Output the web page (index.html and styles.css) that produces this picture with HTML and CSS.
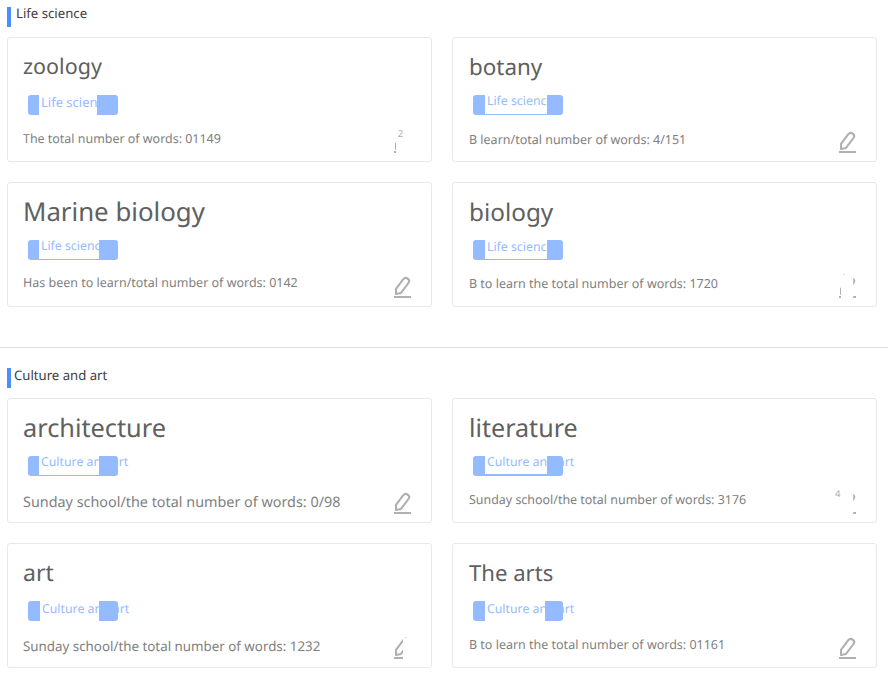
FILE: index.html
```html
<!DOCTYPE html>
<html lang="en">
<head>
<meta charset="utf-8">
<title>Word categories</title>
<link rel="stylesheet" href="styles.css">
</head>
<body>
<svg class="defs" width="0" height="0" aria-hidden="true">
  <defs>
    <g id="pencil">
      <path d="M9 16.8L16.3 7.2Q18.4 4.9 21 6.9Q23.2 8.7 21.5 11L14 20.9L9.1 22Z" fill="none" stroke="#b0b0b0" stroke-width="2.1" stroke-linejoin="round"/>
      <path d="M7 24h17v2H7z" fill="#b0b0b0"/>
    </g>
    <clipPath id="edge-left"><path d="M7 0h2v30H7z"/></clipPath>
    <clipPath id="edge-right"><path d="M21.2 0h3v30h-3z"/></clipPath>
    <clipPath id="half"><path d="M0 0h16v30H0z"/></clipPath>
  </defs>
</svg>
<section class="section">
  <h2 class="heading heading-life">Life science</h2>
  <div class="grid">
    <article class="card zoology">
      <h3 class="title">zoology</h3>
      <div class="tag"><span class="tag-text">Life scien</span></div>
      <div class="foot"><p class="count">The total number of words: 01149</p>
        <svg class="edit" viewBox="0 0 30 30"><use href="#pencil" clip-path="url(#edge-left)"/><text class="mark" x="10.8" y="10">2</text></svg></div>
    </article>
    <article class="card botany">
      <h3 class="title">botany</h3>
      <div class="tag"><span class="tag-text">Life scienc</span></div>
      <div class="foot"><p class="count">B learn/total number of words: 4/151</p>
        <svg class="edit" viewBox="0 0 30 30"><use href="#pencil"/></svg></div>
    </article>
    <article class="card marine">
      <h3 class="title">Marine biology</h3>
      <div class="tag"><span class="tag-text">Life scienc</span></div>
      <div class="foot"><p class="count">Has been to learn/total number of words: 0142</p>
        <svg class="edit" viewBox="0 0 30 30"><use href="#pencil"/></svg></div>
    </article>
    <article class="card biology">
      <h3 class="title">biology</h3>
      <div class="tag"><span class="tag-text">Life scienc</span></div>
      <div class="foot"><p class="count">B to learn the total number of words: 1720</p>
        <svg class="edit" viewBox="0 0 30 30"><use href="#pencil" clip-path="url(#edge-left)"/><use href="#pencil" clip-path="url(#edge-right)"/><path class="speck" d="M11 2h2l-1 1.5"/></svg></div>
    </article>
  </div>
</section>
<section class="section section-culture">
  <h2 class="heading heading-culture">Culture and art</h2>
  <div class="grid">
    <article class="card architecture">
      <h3 class="title">architecture</h3>
      <div class="tag"><span class="tag-text">Culture and art</span></div>
      <div class="foot"><p class="count">Sunday school/the total number of words: 0/98</p>
        <svg class="edit" viewBox="0 0 30 30"><use href="#pencil"/></svg></div>
    </article>
    <article class="card literature">
      <h3 class="title">literature</h3>
      <div class="tag"><span class="tag-text">Culture and art</span></div>
      <div class="foot"><p class="count">Sunday school/the total number of words: 3176</p>
        <svg class="edit" viewBox="0 0 30 30"><use href="#pencil" clip-path="url(#edge-right)"/><text class="mark" x="2.9" y="9">4</text></svg></div>
    </article>
    <article class="card art">
      <h3 class="title">art</h3>
      <div class="tag"><span class="tag-text">Culture and art</span></div>
      <div class="foot"><p class="count">Sunday school/the total number of words: 1232</p>
        <svg class="edit" viewBox="0 0 30 30"><use href="#pencil" clip-path="url(#half)"/><path class="speck" d="M18 4h2l-1 1.5"/></svg></div>
    </article>
    <article class="card arts">
      <h3 class="title">The arts</h3>
      <div class="tag"><span class="tag-text">Culture and art</span></div>
      <div class="foot"><p class="count">B to learn the total number of words: 01161</p>
        <svg class="edit" viewBox="0 0 30 30"><use href="#pencil"/></svg></div>
    </article>
  </div>
</section>
</body>
</html>
```
FILE: styles.css
```css
* { box-sizing: border-box; }
body {
  margin: 0;
  height: 675px;
  overflow: hidden;
  background: #fff;
  color: #606060;
  font-family: "Noto Sans", "Open Sans", sans-serif;
  text-rendering: geometricPrecision;
}
.defs { display: block; }
h2, h3, p { margin: 0; font-weight: 400; white-space: nowrap; }

.section { height: 347px; padding: 7px 11px 0 7px; }
.section-culture { height: 328px; border-top: 1px solid #ddd; padding-top: 20px; }
.heading {
  height: 20px;
  margin-bottom: 10px;
  border-left: 4px solid #4c8dff;
  color: #404040;
}
.heading-life { padding-left: 5px; font-size: 13.2px; line-height: 13px; }
.heading-culture { padding-left: 3px; font-size: 13.15px; line-height: 15px; }

.grid { display: grid; grid-template-columns: 425px 425px; grid-auto-rows: 125px; gap: 20px; }
.card {
  display: flex;
  flex-direction: column;
  border: 1px solid #e8e8e8;
  border-radius: 3px;
  padding: 14px 16px 0 15px;
}
.card:nth-child(even) { padding-left: 16px; }
.title { height: 43px; font-size: var(--title); line-height: var(--title-line); }

.tag {
  width: 90px;
  height: 20px;
  flex: none;
  margin-left: 5px;
  border: solid #94bbff;
  border-width: 0 var(--right, 19px) var(--under, 1px) var(--left, 11px);
  border-radius: 3px;
  color: #94bbff;
}
.card:nth-child(even) .tag { margin-left: 4px; --left: 12px; --right: 16px; }
.tag-text {
  display: block;
  padding-left: 2px;
  font-size: var(--label, 12.3px);
  line-height: var(--label-line);
  white-space: nowrap;
}

.foot { display: flex; justify-content: space-between; height: 46px; }
.count { color: #808080; font-size: var(--count, 12.49px); line-height: var(--count-line); }
.edit { flex: none; width: 30px; height: 30px; margin: 12px -2px 0 0; }
.mark { fill: #a8adb5; font-size: 9.5px; }
.speck { fill: #ccc; }

.zoology { --title: 21.5px; --title-line: 29.3px; --label: 13px; --label-line: 14.4px; --count: 12.45px; --count-line: 48px; }
.zoology .tag { --right: 21px; --under: 0; }
.botany { --title: 22.4px; --title-line: 30.7px; --label-line: 12.4px; --count-line: 50px; }
.marine { --title: 25.8px; --title-line: 28px; --label-line: 12.4px; --count-line: 46px; }
.biology { --title: 24.3px; --title-line: 31.2px; --label-line: 14.4px; --count-line: 48px; }
.architecture { --title: 25.3px; --title-line: 30.6px; --label-line: 12.4px; --count: 14.38px; --count-line: 53px; }
.literature { --title: 25.1px; --title-line: 30.7px; --label-line: 12.4px; --count: 12.45px; --count-line: 48px; }
.literature .tag { --under: 2px; }
.art { --title: 23px; --title-line: 28.2px; --label-line: 16.4px; --count: 13.35px; --count-line: 51.6px; }
.art .tag { --left: 12px; --under: 0; }
.arts { --title: 22.1px; --title-line: 31px; --label-line: 16.4px; --count-line: 48px; }
.card.arts .tag { --right: 18px; --under: 0; }
```
